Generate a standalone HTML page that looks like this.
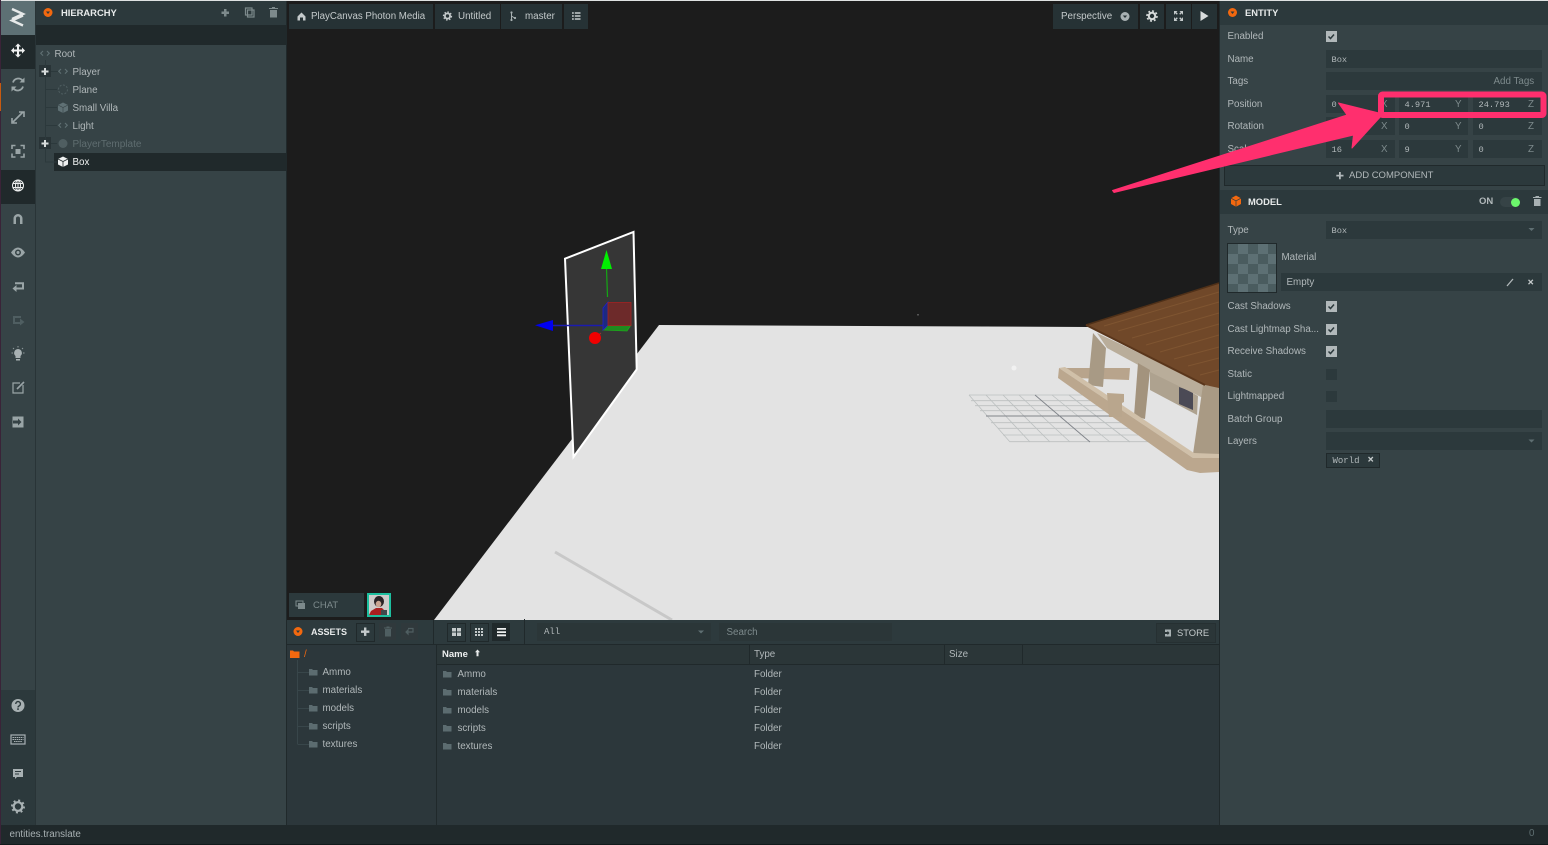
<!DOCTYPE html>
<html><head><meta charset="utf-8"><title>PlayCanvas Editor</title>
<style>
html,body{margin:0;padding:0;background:#20292b;}
#r{position:relative;width:1548px;height:845px;overflow:hidden;background:#20292b;font-family:"Liberation Sans",sans-serif;font-size:9.8px;color:#b1b8ba;}
#r div,#r svg{position:absolute;}
.t{white-space:nowrap;line-height:12px;height:12px;margin-top:1px;}
.m{font-family:"Liberation Mono",monospace;font-size:8.7px;color:#b1b8ba;}
.f{background:#2c393c;height:18px;}
.h{font-weight:bold;color:#e8ebeb;font-size:9.4px;}
.b{background:#263235;height:25px;top:4px;}
.c{width:11px;height:11px;left:1326px;background:#b1b8ba;}
.e{width:11px;height:11px;left:1326px;background:#2c393c;}
.l{left:1227.500px;}
.g{color:#7d8a8c;}
</style></head><body><div id="r">
<!-- main backgrounds -->
<div style="left:0;top:0;width:1548px;height:1px;background:#dfe2e2"></div>
<div style="left:0;top:0;width:1px;height:845px;background:#3a2338"></div>
<div style="left:0;top:83px;width:1px;height:28px;background:#c85a10"></div>
<div style="left:1px;top:1px;width:35px;height:824px;background:#364346"></div>
<div style="left:1px;top:690px;width:35px;height:135px;background:#2c393c"></div>
<div style="left:1px;top:1px;width:34px;height:34px;background:#5d7074"></div>
<div style="left:1px;top:35px;width:34px;height:34px;background:#20292b"></div>
<div style="left:1px;top:170px;width:34px;height:34px;background:#20292b"></div>
<div style="left:35px;top:1px;width:1px;height:824px;background:#293437"></div>

<!-- hierarchy -->
<div style="left:36px;top:1px;width:250px;height:824px;background:#364346"></div>
<div style="left:36px;top:1px;width:250px;height:24px;background:#2c393c"></div>
<div style="left:36px;top:25px;width:250px;height:20px;background:#20292b"></div>
<div style="left:286px;top:1px;width:1px;height:824px;background:#20292b"></div>
<div style="left:54px;top:153px;width:232px;height:18px;background:#20292b"></div>
<div style="left:39px;top:65px;width:12px;height:12px;background:#293437"></div>
<div style="left:39px;top:137px;width:12px;height:12px;background:#293437"></div>
<svg style="left:0;top:0" width="290" height="175" viewBox="0 0 290 175">
 <g fill="none" stroke="#2c393c" stroke-width="1"><path d="M45.500 60V162H57M45 89.500H57M45 107.500H57M45 125.500H57M51 71.500H58M51 143.500H57"/></g>
 <circle cx="48" cy="12.500" r="4.500" fill="#f2680f"/><path d="M46 11.500h4l-2 2.500z" fill="#2c393c"/>
 <g fill="#7d8a8c"><path d="M224 9h2.500v2.500H229V14h-2.500v2.500H224V14h-2.500v-2.500H224z" /></g>
 <g fill="none" stroke="#7d8a8c" stroke-width="1.200"><rect x="245.500" y="8" width="6.500" height="7"/><rect x="247.500" y="10" width="6.500" height="7"/></g>
 <path d="M270 10h7v7.500h-7zM269 8h9v1h-9zM272 7h3v1h-3z" fill="#7d8a8c"/>
 <g fill="none" stroke="#5f6f72" stroke-width="1.100"><path d="M43 51l-2.300 2.300L43 55.600M47 51l2.300 2.300L47 55.600M61 69l-2.300 2.300L61 73.600M65 69l2.300 2.300L65 73.600M61 123l-2.300 2.300L61 127.600M65 123l2.300 2.300L65 127.600"/></g>
 <circle cx="63" cy="89.500" r="4.500" fill="none" stroke="#4f5e61" stroke-dasharray="2 1.500"/>
 <path d="M63 102.500l5 2.500v5.500l-5 2.500-5-2.500V105z" fill="#5f7074"/><path d="M58 105l5 2.500 5-2.500M63 107.500V113" stroke="#364346" fill="none" stroke-width=".6"/>
 <circle cx="63" cy="143.500" r="4.500" fill="#4f5e61"/>
 <path d="M63 156.500l5 2.500v5.500l-5 2.500-5-2.500V159z" fill="#eef0f0"/><path d="M58 159l5 2.500 5-2.500M63 161.500V167" stroke="#20292b" fill="none" stroke-width=".8"/>
 <path d="M44 68h2v2.500h2.500v2H46V75h-2v-2.500h-2.500v-2H44zM44 140h2v2.500h2.500v2H46V147h-2v-2.500h-2.500v-2H44z" fill="#d8dcdc"/>
</svg>
<div class="t h" style="left:61px;top:6px">HIERARCHY</div>
<div class="t" style="left:54.500px;top:47.500px">Root</div>
<div class="t" style="left:72.500px;top:65.500px">Player</div>
<div class="t" style="left:72.500px;top:83.500px">Plane</div>
<div class="t" style="left:72.500px;top:101.500px">Small Villa</div>
<div class="t" style="left:72.500px;top:119.500px">Light</div>
<div class="t" style="left:72.500px;top:137.500px;color:#5f6d70;font-size:10px">PlayerTemplate</div>
<div class="t" style="left:72.500px;top:155.500px;color:#f0f2f2">Box</div>

<!-- left toolbar icons -->
<svg style="left:0;top:0" width="36" height="845" viewBox="0 0 36 845">
 <path d="M12 9l11 5-11 5M23 15.500L12 20.500l11 5" fill="none" stroke="#e6e9e9" stroke-width="2.400"/>
 <path d="M18 43.500l3 3h-2v3h3v-2l3 3-3 3v-2h-3v3h2l-3 3-3-3h2v-3h-3v2l-3-3 3-3v2h3v-3h-2z" fill="#f0f2f2"/>
 <g fill="none" stroke="#9aa5a7" stroke-width="1.800"><path d="M13 82.500a5.500 5.500 0 0 1 9.500-2M23 86.500a5.500 5.500 0 0 1-9.500 2"/></g>
 <path d="M24.500 77.500v5h-5zM11.500 91.500v-5h5z" fill="#9aa5a7"/>
 <path d="M13 122l10-10M19 112h5v5M12 118v5h5" fill="none" stroke="#9aa5a7" stroke-width="1.600"/>
 <path d="M12 149v-3.500h3.500M20.500 145.500H24V149M24 153.500V157h-3.500M15.500 157H12v-3.500" fill="none" stroke="#9aa5a7" stroke-width="1.600"/><rect x="15.500" y="149" width="5" height="5" fill="#9aa5a7"/>
 <g fill="none" stroke="#eef0f0" stroke-width="1"><circle cx="18" cy="185.500" r="5.500"/><ellipse cx="18" cy="185.500" rx="2.500" ry="5.500"/><path d="M12.500 183.500h11M12.500 187.500h11M18 180v11"/></g>
 <path d="M13.500 224v-5.500a4.500 4.500 0 0 1 9 0V224h-2.500v-5.500a2 2 0 0 0-4 0V224z" fill="#9aa5a7"/>
 <path d="M11 252.500Q18 242.500 25 252.500 18 262.500 11 252.500z" fill="#9aa5a7"/><circle cx="18" cy="252.500" r="3" fill="#364346"/><circle cx="18" cy="252.500" r="1.500" fill="#9aa5a7"/>
 <path d="M15 283.300h8v5.200h-7" fill="none" stroke="#9aa5a7" stroke-width="2"/><path d="M16.500 285l-4 3.500 4 3.500z" fill="#9aa5a7"/>
 <path d="M21 317H14v6h7" fill="none" stroke="#4f5e61" stroke-width="2"/><path d="M20 318.500l4.500 3.500-4.500 3.500z" fill="#4f5e61"/>
 <path d="M18 349a4 4 0 0 1 2.500 7v2h-5v-2A4 4 0 0 1 18 349zM16 359h4v1.500h-4z" fill="#a8b1b3"/>
 <path d="M11.500 353h1.500M23 353h1.500M13 348l1 1M23 348l-1 1M18 346v1.500" stroke="#8d989a" stroke-width="1"/>
 <path d="M23 385v8H13v-10h7" fill="none" stroke="#9aa5a7" stroke-width="1.200"/><path d="M17 389l7-7" stroke="#9aa5a7" stroke-width="1.600"/>
 <path d="M12.500 416.500h11v11h-11z" fill="#9aa5a7"/><path d="M13 420.500h5v-2l3.500 3.500-3.500 3.500v-2h-5z" fill="#364346"/>
 <circle cx="18" cy="705.500" r="6.500" fill="#a8b1b3"/><path d="M15.800 704a2.300 2.300 0 1 1 3.200 2c-.7.400-1 .7-1 1.500" fill="none" stroke="#2c393c" stroke-width="1.400"/><rect x="17.200" y="708.300" width="1.600" height="1.600" fill="#2c393c"/>
 <rect x="11" y="735" width="14" height="9" fill="none" stroke="#a8b1b3" stroke-width="1.200"/><path d="M12.500 737.500h11M12.500 739.500h11M14 741.500h8" stroke="#a8b1b3" stroke-width="1" stroke-dasharray="1.500 .6"/>
 <path d="M13 769h10v8h-6l-2 2v-2h-2z" fill="#a8b1b3"/><path d="M15 771.500h6M15 774h4" stroke="#2c393c" stroke-width=".9"/>
 <circle cx="18" cy="806.500" r="4.300" fill="none" stroke="#a8b1b3" stroke-width="2.200"/><circle cx="18" cy="806.500" r="6" fill="none" stroke="#a8b1b3" stroke-width="2" stroke-dasharray="2 2.700"/>
</svg>

<!-- viewport -->
<div style="left:287px;top:1px;width:933px;height:619px;background:#1c1c1c"></div>
<svg style="left:287px;top:0;" width="933" height="620" viewBox="287 0 933 620">
 <polygon points="659,325 1088,327 1219,340 1219,620 434,620" fill="#e3e3e3"/>
 <path d="M555 552L672 620" stroke="#c8c8c8" stroke-width="3"/>
 <rect x="917" y="314" width="2" height="1.500" fill="#555"/>
 <!-- grid -->
 <g stroke="#bcc0c0" stroke-width=".8" fill="none">
  <path d="M969 395H1103M971 400.700H1110M975 405.700H1118M980 410.700H1125M991 422.700H1135M998 428.300H1142M1003 435H1150M1010 441.700H1152"/>
  <path d="M969 395L1010 442M986 395L1030 442M1003 395L1050 442M1019 395L1070 442M1052 395L1110 442M1069 395L1130 442M1086 395L1150 442M1103 395L1152 437"/>
 </g>
 <g stroke="#80848a" stroke-width=".9" fill="none"><path d="M986 416H1110M1035 395L1090 442"/></g>
 <circle cx="1014" cy="368" r="2.500" fill="#f1f1f1"/>
 <!-- villa -->
 <polygon points="1060,368 1130,368 1129,380 1075,378" fill="#b8a48c"/>
 <polygon points="1150,370 1198,396 1197,415 1150,390" fill="#aea28f"/>
 <polygon points="1179,387 1193,392 1193,410 1179,404" fill="#4b4a55"/>
 <polygon points="1097,333 1207,385 1203,398 1150,372 1142,367 1107,348" fill="#b9ad9a"/>
 <polygon points="1093,333 1106,348 1103,387 1088,385" fill="#a89a85"/>
 <polygon points="1138,363 1150,370 1145,419 1134,416" fill="#a3937d"/>
 <polygon points="1203,385 1219,387 1219,456 1193,454" fill="#a99a84"/>
 <polygon points="1059,368 1065,367 1194,453 1219,454 1219,458 1193,458" fill="#d0c0a9"/>
 <polygon points="1059,368 1193,458 1219,458 1219,472 1200,473 1187,470 1058,378" fill="#bba78e"/>
 <polygon points="1107,393 1124,394 1124,402 1122,403 1122,417 1109,417" fill="#b9a68d"/>
 <polygon points="1086,325 1219,283 1219,388 1205,385" fill="#704829"/>
 <path d="M1086 325L1219 283" stroke="#4f3018" stroke-width="1.500"/>
 <path d="M1104 326L1219 292M1118 331L1219 302M1132 338L1219 313M1146 345L1219 324M1160 352L1219 335M1174 359L1219 347M1188 366L1219 358M1200 375L1219 370" stroke="#7f5531" stroke-width="1"/>
 <path d="M1086 325L1205 385" stroke="#5a361b" stroke-width="2"/>
 <!-- selected plane -->
 <polygon points="565,258.700 633.500,232 636.700,369.300 573.500,457" fill="#363636" stroke="#fff" stroke-width="2"/>
 <!-- gizmo -->
 <path d="M606.500 268L607.500 297" stroke="#14a814" stroke-width="1.200"/>
 <polygon points="606.500,250 601,269 612,269" fill="#00ef00"/>
 <path d="M553 325.500H603" stroke="#1b1bb0" stroke-width="1.500"/>
 <polygon points="535,325.300 553,320 553,331" fill="#0000f0"/>
 <polygon points="603,330 608,325 631,325 627,331" fill="#1f8a1f" stroke="#1ca81c" stroke-width=".8"/>
 <polygon points="603,308 608,302 608,325 603,330" fill="#1c2a80" stroke="#1f1fd0" stroke-width=".8"/>
 <rect x="608" y="302.500" width="23" height="23" fill="#6d2a2a" stroke="#a52222" stroke-width=".8"/>
 <path d="M601 333L595 338" stroke="#a03030" stroke-width="1"/>
 <circle cx="595" cy="338" r="6" fill="#f00000"/>
</svg>

<!-- top toolbar -->
<div class="b" style="left:289px;width:144px"></div>
<div class="b" style="left:435px;width:65px"></div>
<div class="b" style="left:501px;width:61px"></div>
<div class="b" style="left:564px;width:24px"></div>
<div class="b" style="left:1053px;width:85px"></div>
<div class="b" style="left:1140px;width:24px"></div>
<div class="b" style="left:1166px;width:25px"></div>
<div class="b" style="left:1192px;width:25px"></div>
<div class="t" style="left:311px;top:10px;color:#c4cacb;font-size:9.700px">PlayCanvas Photon Media</div>
<div class="t" style="left:458px;top:10px;color:#c4cacb">Untitled</div>
<div class="t" style="left:525px;top:10px;color:#c4cacb">master</div>
<div class="t" style="left:1061px;top:10px;color:#c4cacb">Perspective</div>
<svg style="left:287px;top:0" width="933" height="32" viewBox="287 0 933 32">
 <path d="M297.500 16.500l4-4 4 4v4h-2.500v-3h-3v3h-2.500z" fill="#c4cacb"/>
 <circle cx="447.500" cy="16" r="2.600" fill="none" stroke="#c4cacb" stroke-width="1.800"/><circle cx="447.500" cy="16" r="4" fill="none" stroke="#c4cacb" stroke-width="1.300" stroke-dasharray="1.500 1.600"/>
 <path d="M511.500 12.500v7M511.500 16l3 2" stroke="#a8b1b3" stroke-width="1" fill="none"/><circle cx="511.500" cy="20" r="1.100" fill="#a8b1b3"/><circle cx="515" cy="18" r="1.100" fill="#a8b1b3"/><circle cx="511.500" cy="12.500" r="1.100" fill="#a8b1b3"/>
 <path d="M572 13h1.800M572 16h1.800M572 19h1.800M574.800 13h5.700M574.800 16h5.700M574.800 19h5.700" stroke="#c4cacb" stroke-width="1.400"/>
 <circle cx="1125" cy="16.500" r="4.500" fill="#a8b1b3"/><path d="M1122.800 15.500h4.400l-2.200 2.500z" fill="#263235"/>
 <circle cx="1152" cy="16" r="3.200" fill="none" stroke="#d8dcdc" stroke-width="2"/><circle cx="1152" cy="16" r="5" fill="none" stroke="#d8dcdc" stroke-width="1.600" stroke-dasharray="2 1.900"/>
 <path d="M1174 15v-4h3.500l-1.200 1.200 1.500 1.500-1 1-1.500-1.500zM1183 15v-4h-3.500l1.200 1.200-1.500 1.500 1 1 1.500-1.500zM1174 17v4h3.500l-1.200-1.200 1.500-1.500-1-1-1.500 1.500zM1183 17v4h-3.500l1.200-1.200-1.500-1.500 1-1 1.500 1.500z" fill="#c4cacb"/>
 <path d="M1200.500 11l8 5-8 5z" fill="#d8dcdc"/>
</svg>

<!-- chat / avatar -->
<div style="left:289px;top:593px;width:75px;height:24px;background:#2c393c"></div>
<svg style="left:295px;top:600px" width="12" height="10" viewBox="0 0 12 10"><path d="M1 1h7v5H1z" fill="none" stroke="#7d8a8c"/><path d="M3 3h7v6H3z" fill="#7d8a8c"/></svg>
<div class="t" style="left:313px;top:599px;color:#7d8a8c;font-size:9.500px">CHAT</div>
<svg style="left:367px;top:593px" width="24" height="24" viewBox="0 0 24 24">
 <rect width="24" height="24" fill="#1dbf9f"/><rect x="2" y="2" width="20" height="20" fill="#cfcbca"/>
 <path d="M2 22l2-4 5-3h6l3 3v4z" fill="#a82020"/>
 <ellipse cx="12" cy="8.500" rx="5" ry="5.500" fill="#2a2326"/><ellipse cx="11.500" cy="11" rx="2.800" ry="3.200" fill="#c9a592"/>
 <rect x="14" y="17" width="6" height="5" fill="#3e4a4c"/>
</svg>

<!-- assets panel -->
<div style="left:287px;top:620px;width:933px;height:205px;background:#2c373b"></div>
<div style="left:287px;top:620px;width:933px;height:24px;background:#2d3a3d"></div>
<div style="left:287px;top:644px;width:933px;height:1px;background:#20292b"></div>
<div style="left:436px;top:644px;width:1px;height:181px;background:#20292b"></div>
<div style="left:433px;top:620px;width:1px;height:24px;background:#20292b"></div>
<div style="left:524px;top:619px;width:1px;height:25px;background:#20292b"></div>
<div style="left:437px;top:645px;width:783px;height:19px;background:#2b3638"></div>
<div style="left:437px;top:664px;width:783px;height:1px;background:#20292b"></div>
<div style="left:749px;top:645px;width:1px;height:19px;background:#20292b"></div>
<div style="left:944px;top:645px;width:1px;height:19px;background:#20292b"></div>
<div style="left:1022px;top:645px;width:1px;height:19px;background:#20292b"></div>
<div style="left:356px;top:623px;width:17px;height:17px;background:#2c393c;border:1px solid #20292b"></div>
<div style="left:379px;top:623px;width:17px;height:17px;background:#30393c"></div>
<div style="left:401px;top:623px;width:17px;height:17px;background:#30393c"></div>
<div style="left:447px;top:623px;width:17px;height:17px;background:#2c393c;border:1px solid #20292b"></div>
<div style="left:470px;top:623px;width:17px;height:17px;background:#2c393c;border:1px solid #20292b"></div>
<div style="left:492px;top:623px;width:18px;height:18px;background:#20292b"></div>
<div style="left:537px;top:623px;width:174px;height:18px;background:#2b3638"></div>
<div style="left:719px;top:623px;width:173px;height:18px;background:#2b3638"></div>
<div style="left:1156px;top:623px;width:58px;height:18px;background:#2b3638;border:1px solid #263032"></div>
<svg style="left:287px;top:620px" width="933" height="140" viewBox="287 620 933 140">
 <circle cx="298" cy="631.500" r="4.500" fill="#f2680f"/><path d="M296 630.500h4l-2 2.500z" fill="#2c393c"/>
 <path d="M364 628h2.400v3h3v2.400h-3v3H364v-3h-3V631h3z" fill="#c4cacb" transform="translate(0,-.5)"/>
 <path d="M385 629h6v7.500h-6zM384 627.500h8v1h-8zM386.500 626.500h3v1h-3z" fill="#4f5e61"/>
 <path d="M406 632h7v-3.500h-5M406 632l2-2v4z" fill="none" stroke="#4f5e61" stroke-width="1.200"/>
 <path d="M452 628h4v3.500h-4zM457 628h4v3.500h-4zM452 632.500h4v3.500h-4zM457 632.500h4v3.500h-4z" fill="#c4cacb"/>
 <g fill="#c4cacb"><rect x="475" y="628" width="2" height="2"/><rect x="478" y="628" width="2" height="2"/><rect x="481" y="628" width="2" height="2"/><rect x="475" y="631" width="2" height="2"/><rect x="478" y="631" width="2" height="2"/><rect x="481" y="631" width="2" height="2"/><rect x="475" y="634" width="2" height="2"/><rect x="478" y="634" width="2" height="2"/><rect x="481" y="634" width="2" height="2"/></g>
 <path d="M497 628h9v1.800h-9zM497 631.200h9v1.800h-9zM497 634.400h9v1.800h-9z" fill="#eef0f0"/>
 <path d="M698 630.500h6l-3 3z" fill="#5f6f72"/>
 <path d="M1165 629.500h6v7h-6z" fill="#a8b1b3"/><path d="M1165 632h2.500v-1.200l2 2.200-2 2.200V634H1165z" fill="#2b3638"/>
 <path d="M290 650.500h3l1 1h5.500v6.500H290z" fill="#f2680f"/>
 <path d="M477.500 649.500l2.500 2.700h-1.500v4h-2v-4H475z" fill="#e8ebeb"/>
 <g fill="none" stroke="#38464a"><path d="M297.500 660V744.500M298 672.500H309M298 690.500H309M298 708.500H309M298 726.500H309M298 744.500H309"/></g>
 <g fill="#5c6c70">
  <path d="M309 669h3l1 1h4.500v5.500H309z"/><path d="M309 687h3l1 1h4.500v5.500H309z"/><path d="M309 705h3l1 1h4.500v5.500H309z"/><path d="M309 723h3l1 1h4.500v5.500H309z"/><path d="M309 741h3l1 1h4.500v5.500H309z"/>
  <path d="M443 671h3l1 1h4.500v5.500H443z"/><path d="M443 689h3l1 1h4.500v5.500H443z"/><path d="M443 707h3l1 1h4.500v5.500H443z"/><path d="M443 725h3l1 1h4.500v5.500H443z"/><path d="M443 743h3l1 1h4.500v5.500H443z"/>
 </g>
</svg>
<div class="t h" style="left:311px;top:625px;font-size:9px">ASSETS</div>
<div class="t" style="left:304px;top:648px;color:#f2680f">/</div>
<div class="t m" style="left:544px;top:625px;font-size:9px">All</div>
<div class="t g" style="left:726.500px;top:626px">Search</div>
<div class="t" style="left:1177px;top:626px;color:#c4cacb;font-size:9.400px">STORE</div>
<div class="t" style="left:442px;top:648px;color:#eef0f0;font-weight:bold;font-size:9.500px">Name</div>
<div class="t" style="left:754px;top:648px">Type</div>
<div class="t" style="left:949px;top:648px">Size</div>
<div class="t" style="left:322.500px;top:666px">Ammo</div>
<div class="t" style="left:322.500px;top:684px">materials</div>
<div class="t" style="left:322.500px;top:702px">models</div>
<div class="t" style="left:322.500px;top:720px">scripts</div>
<div class="t" style="left:322.500px;top:738px">textures</div>
<div class="t" style="left:457.500px;top:668px">Ammo</div>
<div class="t" style="left:457.500px;top:686px">materials</div>
<div class="t" style="left:457.500px;top:704px">models</div>
<div class="t" style="left:457.500px;top:722px">scripts</div>
<div class="t" style="left:457.500px;top:740px">textures</div>
<div class="t" style="left:754px;top:668px">Folder</div>
<div class="t" style="left:754px;top:686px">Folder</div>
<div class="t" style="left:754px;top:704px">Folder</div>
<div class="t" style="left:754px;top:722px">Folder</div>
<div class="t" style="left:754px;top:740px">Folder</div>

<!-- right panel -->
<div style="left:1219px;top:1px;width:1px;height:824px;background:#20292b"></div>
<div style="left:1220px;top:1px;width:328px;height:824px;background:#364346"></div>
<div style="left:1220px;top:1px;width:328px;height:24px;background:#2c393c"></div>
<div style="left:1220px;top:190px;width:328px;height:24px;background:#2c393c"></div>
<div class="t h" style="left:1245px;top:6px">ENTITY</div>
<div class="t h" style="left:1248px;top:195px">MODEL</div>
<div class="t l" style="top:30px">Enabled</div>
<div class="t l" style="top:53px">Name</div>
<div class="t l" style="top:75px">Tags</div>
<div class="t l" style="top:98px">Position</div>
<div class="t l" style="top:120px">Rotation</div>
<div class="t l" style="top:143px">Scale</div>
<div class="c" style="top:31px"></div>
<div class="f" style="left:1326px;top:50px;width:216px"></div>
<div class="f" style="left:1326px;top:72px;width:216px"></div>
<div class="f" style="left:1326px;top:95px;width:69px"></div>
<div class="f" style="left:1399px;top:95px;width:69px"></div>
<div class="f" style="left:1473px;top:95px;width:69px"></div>
<div class="f" style="left:1326px;top:117px;width:69px"></div>
<div class="f" style="left:1399px;top:117px;width:69px"></div>
<div class="f" style="left:1473px;top:117px;width:69px"></div>
<div class="f" style="left:1326px;top:140px;width:69px"></div>
<div class="f" style="left:1399px;top:140px;width:69px"></div>
<div class="f" style="left:1473px;top:140px;width:69px"></div>
<div class="t m" style="left:1331.500px;top:52.500px">Box</div>
<div class="t g" style="left:1493.500px;top:75px">Add Tags</div>
<div class="t m" style="left:1331.500px;top:97.500px">0</div>
<div class="t m" style="left:1404.500px;top:97.500px">4.971</div>
<div class="t m" style="left:1478.500px;top:97.500px">24.793</div>
<div class="t m" style="left:1404.500px;top:119.500px">0</div>
<div class="t m" style="left:1478.500px;top:119.500px">0</div>
<div class="t m" style="left:1331.500px;top:142.500px">16</div>
<div class="t m" style="left:1404.500px;top:142.500px">9</div>
<div class="t m" style="left:1478.500px;top:142.500px">0</div>
<div class="t g" style="left:1381px;top:98px">X</div><div class="t g" style="left:1455px;top:98px">Y</div><div class="t g" style="left:1528px;top:98px">Z</div>
<div class="t g" style="left:1381px;top:120px">X</div><div class="t g" style="left:1455px;top:120px">Y</div><div class="t g" style="left:1528px;top:120px">Z</div>
<div class="t g" style="left:1381px;top:143px">X</div><div class="t g" style="left:1455px;top:143px">Y</div><div class="t g" style="left:1528px;top:143px">Z</div>
<div style="left:1224px;top:165px;width:319px;height:19px;background:#2c393c;border:1px solid #20292b"></div>
<div class="t" style="left:1349px;top:169px;color:#b1b8ba;font-size:9.500px">ADD COMPONENT</div>
<div class="t" style="left:1479px;top:195px;font-weight:bold;font-size:9.500px">ON</div>
<div style="left:1500px;top:197px;width:20px;height:10px;border-radius:5px;background:#364346"></div>
<div style="left:1511px;top:197.500px;width:9px;height:9px;border-radius:5px;background:#6cf76c"></div>

<div class="t l" style="top:224px">Type</div>
<div class="f" style="left:1326px;top:221px;width:216px"></div>
<div class="t m" style="left:1331.500px;top:223.500px">Box</div>
<svg style="left:1227px;top:243px" width="50" height="50" viewBox="0 0 50 50">
 <rect width="50" height="50" fill="#20292b"/><rect x="1" y="1" width="48" height="48" fill="#4a5c5f"/>
 <g fill="#5d7074"><rect x="11" y="1" width="10" height="10"/><rect x="31" y="1" width="10" height="10"/><rect x="1" y="11" width="10" height="10"/><rect x="21" y="11" width="10" height="10"/><rect x="41" y="11" width="8" height="10"/><rect x="11" y="21" width="10" height="10"/><rect x="31" y="21" width="10" height="10"/><rect x="1" y="31" width="10" height="10"/><rect x="21" y="31" width="10" height="10"/><rect x="41" y="31" width="8" height="10"/><rect x="11" y="41" width="10" height="8"/><rect x="31" y="41" width="10" height="8"/></g>
</svg>
<div class="t" style="left:1281.500px;top:251px">Material</div>
<div class="f" style="left:1281px;top:273px;width:261px"></div>
<div class="t" style="left:1286.500px;top:276px">Empty</div>
<div class="t l" style="top:300px">Cast Shadows</div>
<div class="t l" style="top:323px">Cast Lightmap Sha...</div>
<div class="t l" style="top:345px">Receive Shadows</div>
<div class="t l" style="top:368px">Static</div>
<div class="t l" style="top:390px">Lightmapped</div>
<div class="t l" style="top:413px">Batch Group</div>
<div class="t l" style="top:435px">Layers</div>
<div class="c" style="top:301px"></div><div class="c" style="top:324px"></div><div class="c" style="top:346px"></div>
<div class="e" style="top:369px"></div><div class="e" style="top:391px"></div>
<div class="f" style="left:1326px;top:410px;width:216px"></div>
<div class="f" style="left:1326px;top:432px;width:216px"></div>
<div style="left:1326px;top:453px;width:52px;height:13px;background:#2c393c;border:1px solid #20292b"></div>
<div class="t m" style="left:1332.500px;top:453.500px;font-size:9px">World</div>

<svg style="left:1220px;top:0" width="328" height="480" viewBox="1220 0 328 480">
 <circle cx="1232.500" cy="12.500" r="4.500" fill="#f2680f"/><path d="M1230.500 11.500h4l-2 2.500z" fill="#2c393c"/>
 <path d="M1236 195.500l5 2.700v5.800l-5 2.700-5-2.700v-5.800z" fill="#f2680f"/><path d="M1231 198.200l5 2.700 5-2.700M1236 200.900v5.600" stroke="#2c393c" fill="none" stroke-width=".7"/>
 <path d="M1339 172h1.800v2.700h2.700v1.800h-2.700v2.700H1339v-2.700h-2.700v-1.800h2.700z" fill="#b1b8ba"/>
 <path d="M1534 199h6.500v7h-6.500zM1533 197h8.500v1h-8.500zM1535.500 196h3.500v1h-3.500z" fill="#a8b1b3"/>
 <g fill="none" stroke="#2c393c" stroke-width="1.500"><path d="M1328.500 36.500l2 2 3.500-4M1328.500 306.500l2 2 3.500-4M1328.500 329.500l2 2 3.500-4M1328.500 351.500l2 2 3.500-4"/></g>
 <path d="M1528.500 228h6l-3 3zM1528.500 439.500h6l-3 3z" fill="#5f6f72"/>
 <path d="M1507 286l6-7" stroke="#b1b8ba" stroke-width="1.300"/>
 <path d="M1528.500 279.800l4.400 4.400M1532.900 279.800l-4.400 4.400M1368.500 457l4.400 4.400M1372.900 457l-4.400 4.400" stroke="#c4cacb" stroke-width="1.300"/>
</svg>

<!-- pink annotation -->
<svg style="left:1100px;top:85px" width="448" height="115" viewBox="1100 85 448 115">
 <rect x="1381" y="94.500" width="162.500" height="20.500" rx="1.500" fill="none" stroke="#ff2f6e" stroke-width="6"/>
 <path d="M1112.500 190.500L1347 115 1338.500 103 1383 114 1352 148 1353.500 135 1114 192.500z" fill="#ff2f6e" stroke="#ff2f6e" stroke-width="1" stroke-linejoin="round"/>
</svg>

<!-- status bar -->
<div style="left:1px;top:825px;width:1547px;height:19px;background:#20292b"></div>
<div style="left:0;top:844px;width:1548px;height:1px;background:#121a1c"></div>
<div class="t" style="left:9.500px;top:828px;color:#a8b1b3">entities.translate</div>
<div class="t" style="left:1529px;top:827px;color:#5f6f72">0</div>
</div></body></html>
